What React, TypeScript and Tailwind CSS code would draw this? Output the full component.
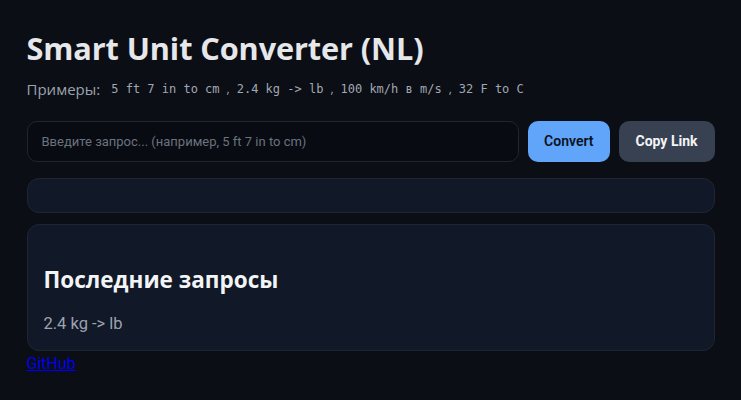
import { useState } from 'react';

const EXAMPLES = ['5 ft 7 in to cm', '2.4 kg -> lb', '100 km/h в m/s', '32 F to C'];

export default function App() {
  const [query, setQuery] = useState('');
  const [recent] = useState<string[]>(['2.4 kg -> lb']);

  return (
    <div className="min-h-screen bg-[#0b0e14] text-[#e5e7eb]" style={{ fontFamily: '"Open Sans", "Noto Sans", sans-serif' }}>
      <div className="max-w-[720px] mx-auto px-4 pt-[29px]">
        <h1 className="text-[30.7px] font-bold leading-[38px] tracking-[-0.1px]">Smart Unit Converter (NL)</h1>

        <p className="mt-[11px] text-[14px] text-[#9ca3af] flex items-center flex-wrap">
          <span className="mr-[11px] text-[15px]">Примеры:</span>
          {EXAMPLES.map((e, i) => (
            <span key={e} className="flex items-center">
              <code className="text-[12px] text-[#a1a8b3]" style={{ fontFamily: '"DejaVu Sans Mono", monospace' }}>{e}</code>
              {i < EXAMPLES.length - 1 && <span className="mx-[7px] text-[12px]">,</span>}
            </span>
          ))}
        </p>

        {/* Query row */}
        <div className="mt-[20px] flex gap-[9px]">
          <input
            value={query}
            onChange={(e) => setQuery(e.target.value)}
            placeholder="Введите запрос... (например, 5 ft 7 in to cm)"
            className="flex-1 h-[41px] rounded-[10px] border border-[#1f2633] bg-[#080b11] px-[14px] text-[13px] text-[#e5e7eb] placeholder:text-[#6b7280] outline-none"
            style={{ fontFamily: 'Roboto, sans-serif' }}
          />
          <button type="button" className="h-[41px] px-[16px] rounded-[10px] bg-[#60a5fa] text-[#0b1220] text-[14px] font-semibold" style={{ fontFamily: 'Roboto, sans-serif' }}>
            Convert
          </button>
          <button type="button" className="h-[41px] px-[17px] rounded-[10px] bg-[#374151] text-[#f3f4f6] text-[14px] font-bold" style={{ fontFamily: 'Roboto, sans-serif' }}>
            Copy Link
          </button>
        </div>

        {/* Result */}
        <div className="mt-[16px] h-[35px] rounded-[12px] border border-[#1f2633] bg-[#111827]" />

        {/* Recent */}
        <div className="mt-[11px] rounded-[12px] border border-[#1f2633] bg-[#111827] px-[16px] pt-[38px] pb-[13px]">
          <h2 className="text-[22.5px] font-bold text-[#f3f4f6]">Последние запросы</h2>
          <ul className="mt-[16px]">
            {recent.map((r) => (
              <li key={r} className="text-[16.5px] text-[#9ca3af]" style={{ fontFamily: 'Roboto, sans-serif' }}>{r}</li>
            ))}
          </ul>
        </div>

        <a href="#" className="text-[16px] text-[#0000ee] underline" style={{ fontFamily: 'Roboto, sans-serif' }}>GitHub</a>
      </div>
    </div>
  );
}
